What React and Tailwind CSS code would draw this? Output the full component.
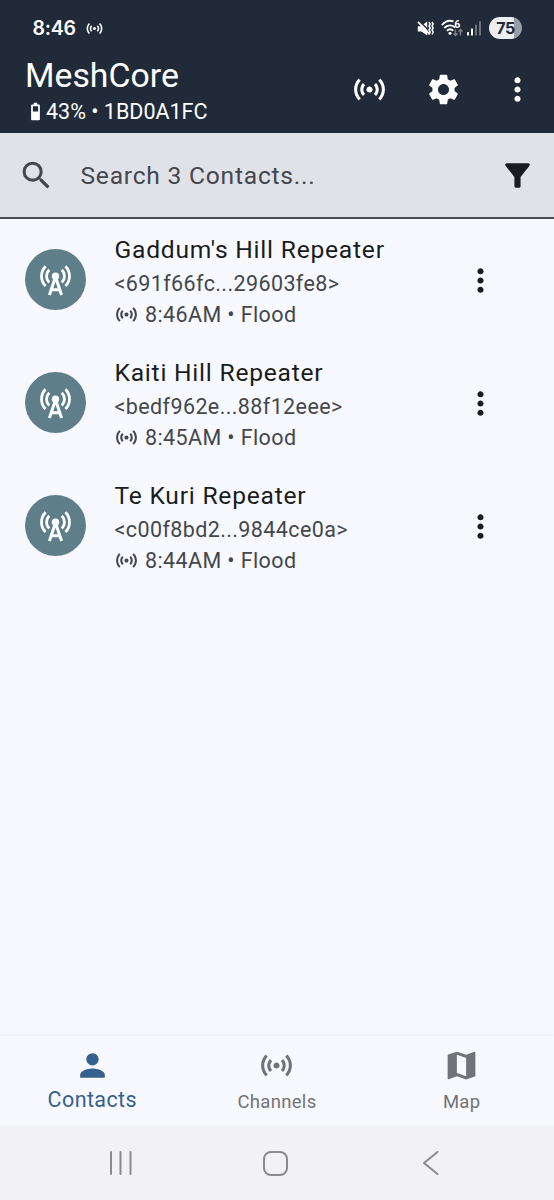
import {
  MdBattery4Bar,
  MdFilterAlt,
  MdMap,
  MdMoreVert,
  MdPerson,
  MdSearch,
  MdSensors,
  MdSettings,
} from 'react-icons/md';

const contacts = [
  { name: "Gaddum's Hill Repeater", key: '<691f66fc...29603fe8>', time: '8:46AM' },
  { name: 'Kaiti Hill Repeater', key: '<bedf962e...88f12eee>', time: '8:45AM' },
  { name: 'Te Kuri Repeater', key: '<c00f8bd2...9844ce0a>', time: '8:44AM' },
];

function TowerIcon() {
  return (
    <svg width="37" height="37" viewBox="-18.5 -18.5 37 37" fill="none" stroke="#fff" strokeWidth="2.8">
      <circle cx="0" cy="-3.3" r="3.7" fill="#fff" stroke="none" />
      <path d="M-6.100 15.500-1.200 1h2.400L6.100 15.500M-4.300 10.300h8.600" strokeWidth="3" />
      <path d="M-9.900-13.200a14 14 0 0 0 0 19.800M9.900-13.200a14 14 0 0 1 0 19.800" />
      <path d="M-6.300-9.700a9 9 0 0 0 0 12.800M6.300-9.700a9 9 0 0 1 0 12.800" />
    </svg>
  );
}

function MutedIcon() {
  return (
    <svg width="17" height="17" viewBox="0 0 17 17" fill="none">
      <path d="M.8 6.300h3L10.200 1.500v14L4.500 11.500H.8z" fill="#fff" />
      <path d="M2.300.8 13.500 12.500" stroke="#202a38" strokeWidth="1.300" />
      <path d="M1 1.800 12.500 14.200" stroke="#fff" strokeWidth="1.800" />
      <path d="M12 2l1.200 2L12 6l1.200 2L12 10l1.200 2-1.200 2.500M15 2l1.200 2L15 6l1.200 2L15 10l1.200 2-1.200 2.500" stroke="#fff" strokeWidth="1.500" />
    </svg>
  );
}

function WifiIcon() {
  return (
    <svg width="22" height="18" viewBox="0 0 22 18" fill="none">
      <path d="M.8 6.200C4.500 1.800 9 1.100 12.500 2.400M3.300 9c3-3.300 8-3.600 11-.4M6 11.800c1.800-1.700 4.400-1.700 6.200 0" stroke="#fff" strokeWidth="1.900" />
      <circle cx="9" cy="14.300" r="1.500" fill="#fff" />
      <text x="13.300" y="9" fontSize="10.500" fontWeight="700" fontFamily="Roboto, sans-serif" fill="#fff">6</text>
      <path d="M14.500 10.500v6m-2-2 2 2 2-2M19.500 16.500v-6m-2 2 2-2 2 2" stroke="#7b828d" strokeWidth="1.400" />
    </svg>
  );
}

function SignalIcon() {
  return (
    <svg width="15" height="16" viewBox="0 0 15 16">
      <rect x="0" y="12" width="2" height="3.500" rx=".5" fill="#fff" />
      <rect x="4" y="8.500" width="2" height="7" rx=".5" fill="#fff" />
      <rect x="8" y="4.500" width="2" height="11" rx=".5" fill="#6b727e" />
      <rect x="12" y="1" width="2" height="14.500" rx=".5" fill="#6b727e" />
    </svg>
  );
}

function StatusBar() {
  return (
    <div className="flex h-14 items-center pl-[32.500px] pr-8 text-white">
      <span className="w-[43px] font-[Inter,sans-serif] text-[19.500px] font-semibold leading-6 tracking-[-0.2px]">8:46</span>
      <MdSensors size={19} className="ml-[9px]" />
      <div className="ml-auto flex items-center">
        <MutedIcon />
        <span className="ml-[7px]"><WifiIcon /></span>
        <span className="ml-1"><SignalIcon /></span>
        <span className="ml-[7px] flex h-[22px] w-[33px] items-center justify-center rounded-full bg-linear-to-r from-[#eceef2] from-75% to-[#989da6] to-75% font-[Inter,sans-serif] text-[16px] font-bold tracking-[-0.5px] text-[#202a38]">
          75
        </span>
      </div>
    </div>
  );
}

function AppBar() {
  return (
    <div className="flex h-[77px] text-white">
      <div className="pl-[25px]">
        <h1 className="pt-px text-[33.800px] leading-[38px]">MeshCore</h1>
        <div className="flex items-center pt-px text-[21.500px] leading-8">
          <MdBattery4Bar size={21} className="mb-0.5" />
          <span>43% • 1BD0A1FC</span>
        </div>
      </div>
      <div className="ml-auto mt-[15px] flex h-[37px] gap-[37px] pr-[18.500px]">
        <MdSensors size={37} />
        <MdSettings size={37} />
        <MdMoreVert size={37} />
      </div>
    </div>
  );
}

function SearchBar() {
  return (
    <div className="flex h-[86px] items-center border-b-2 border-[#494b51] bg-[#e1e2e8] pl-[18px] pr-[18.500px]">
      <MdSearch size={37} className="text-[#43474e]" />
      <span className="ml-[25.500px] pt-0.5 text-[24.600px] tracking-[0.77px] text-[#43474e]">Search 3 Contacts...</span>
      <MdFilterAlt size={37} className="ml-auto text-[#191c20]" />
    </div>
  );
}

function ContactRow({ contact }) {
  return (
    <div className="flex h-[123px] items-center pl-[25px] pr-[55.500px]">
      <div className="mb-[3px] flex size-[61px] items-center justify-center rounded-full bg-[#5e7e89]">
        <TowerIcon />
      </div>
      <div className="ml-[28.500px] text-[21.500px] tracking-[0.39px] text-[#43474e]">
        <div className="pt-px text-[24.600px] leading-[35px] tracking-[0.77px] text-[#191c20]">{contact.name}</div>
        <div className="pt-px leading-[31px]">{contact.key}</div>
        <div className="flex items-center leading-[31px]">
          <MdSensors size={25} className="-ml-[0.5px] mr-1.5" />
          {contact.time} • Flood
        </div>
      </div>
      <MdMoreVert size={37} className="ml-auto text-[#191c20]" />
    </div>
  );
}

function BottomNav() {
  return (
    <nav className="grid h-[90px] grid-cols-3 bg-[#f8f9ff] pt-[11px] text-[#727376] shadow-[0_-1px_4px_rgba(0,0,0,0.06)]">
      <div className="flex flex-col items-center text-[#36618e]">
        <MdPerson size={37} />
        <span className="pt-px text-[21.500px] leading-[30px] tracking-[0.4px]">Contacts</span>
      </div>
      <div className="flex flex-col items-center">
        <MdSensors size={37} />
        <span className="pt-[3px] text-[18.500px] leading-[30px] tracking-[0.3px]">Channels</span>
      </div>
      <div className="flex flex-col items-center">
        <MdMap size={37} />
        <span className="pt-[3px] text-[18.500px] leading-[30px] tracking-[0.3px]">Map</span>
      </div>
    </nav>
  );
}

// Android three-button navigation
function SystemNav() {
  return (
    <div className="flex h-[74px] items-center bg-[#f2f2f4] pl-[108px]">
      <svg width="24" height="26" viewBox="0 0 24 26" stroke="#8b8b8d" strokeWidth="2" strokeLinecap="round">
        <path d="M3 2v22M12.500 2v22M22.500 2v22" />
      </svg>
      <div className="ml-[131px] size-[25px] rounded-[8px] border-2 border-[#8b8b8d]" />
      <svg className="ml-[134px]" width="18" height="26" viewBox="0 0 18 26" fill="none" stroke="#8b8b8d" strokeWidth="2" strokeLinecap="round" strokeLinejoin="round">
        <path d="M15.500 2 2 13l13.500 11" />
      </svg>
    </div>
  );
}

export default function App() {
  return (
    <div className="flex h-[1200px] w-[554px] flex-col overflow-hidden bg-[#f8f9ff] font-[Roboto,sans-serif]">
      <header className="bg-[#202a38]">
        <StatusBar />
        <AppBar />
      </header>
      <SearchBar />
      <main className="flex-1">
        {contacts.map(contact => (
          <ContactRow key={contact.key} contact={contact} />
        ))}
      </main>
      <BottomNav />
      <SystemNav />
    </div>
  );
}
